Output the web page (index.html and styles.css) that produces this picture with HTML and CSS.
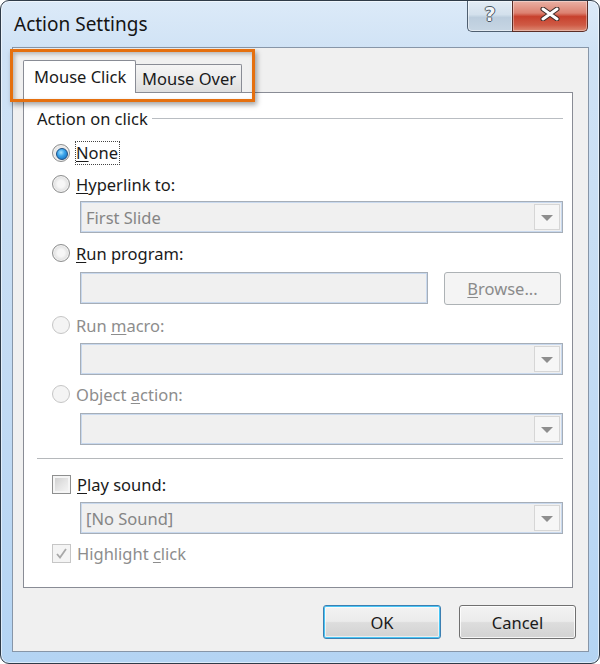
FILE: index.html
```html
<!DOCTYPE html>
<html>
<head>
<meta charset="utf-8">
<link rel="stylesheet" href="styles.css">
</head>
<body>
<div class="window">
  <div class="titlebar">
    <div class="title">Action Settings</div>
    <div class="caption">
      <div class="cbtn help"><span class="q">?</span></div>
      <div class="cbtn close">
        <svg width="22" height="14" viewBox="0 0 22 14">
          <path d="M4 2 L18 12 M18 2 L4 12" stroke="#3d2b28" stroke-width="5" stroke-linecap="round" fill="none"/>
          <path d="M4 2 L18 12 M18 2 L4 12" stroke="#ffffff" stroke-width="3" stroke-linecap="round" fill="none"/>
        </svg>
      </div>
    </div>
  </div>
  <div class="client">
    <div class="tabs">
      <div class="tab active">Mouse Click</div>
      <div class="tab inactive">Mouse Over</div>
    </div>
    <div class="panel">
      <div class="group-head"><span>Action on click</span><div class="gline"></div></div>
      <div class="opt r-none"><span class="radio checked"></span><span class="focus"><u>N</u>one</span></div>
      <div class="opt r-hyper"><span class="radio"></span><span><u>H</u>yperlink to:</span></div>
      <div class="combo c-hyper"><span class="ctext">First Slide</span><span class="dd"><span class="tri"></span></span></div>
      <div class="opt r-run"><span class="radio"></span><span><u>R</u>un program:</span></div>
      <div class="fieldrow"><div class="field"></div><div class="browse"><u>B</u>rowse...</div></div>
      <div class="opt r-macro dis"><span class="radio"></span><span>Run <u>m</u>acro:</span></div>
      <div class="combo c-macro"><span class="ctext"></span><span class="dd"><span class="tri"></span></span></div>
      <div class="opt r-obj dis"><span class="radio"></span><span>Object <u>a</u>ction:</span></div>
      <div class="combo c-obj"><span class="ctext"></span><span class="dd"><span class="tri"></span></span></div>
      <div class="sep"></div>
      <div class="opt r-play"><span class="check"></span><span><u>P</u>lay sound:</span></div>
      <div class="combo c-sound"><span class="ctext">[No Sound]</span><span class="dd"><span class="tri"></span></span></div>
      <div class="opt r-high dis"><span class="check on">
        <svg width="13" height="13" viewBox="0 0 13 13"><path d="M2 7 L5 10.5 L11 2" stroke="#a8a8a8" stroke-width="1.8" fill="none"/></svg>
      </span><span>Highlight <u>c</u>lick</span></div>
    </div>
    <div class="footer">
      <div class="btn ok">OK</div>
      <div class="btn cancel">Cancel</div>
    </div>
  </div>
  <div class="highlight"></div>
</div>
</body>
</html>
```
FILE: styles.css
```css
* { box-sizing: border-box; }
html, body { margin: 0; padding: 0; }
body {
  width: 600px;
  height: 664px;
  overflow: hidden;
  background: #ffffff;
  font-family: "Noto Sans", "Open Sans", sans-serif;
  font-size: 16px;
  color: #1a1a1a;
}
u { text-decoration: underline; text-underline-offset: 2px; text-decoration-thickness: 1px; }

.window {
  position: relative;
  width: 600px;
  height: 664px;
  border: 1px solid #2f3b48;
  border-radius: 9px;
  background: linear-gradient(180deg, #dceaf8 0%, #cfe2f5 8%, #c3dbf3 55%, #b4d4f3 100%);
  box-shadow: inset 0 0 0 1px rgba(255,255,255,0.55);
  padding: 0 10px 11px 11px;
  display: flex;
  flex-direction: column;
}

.titlebar {
  height: 46px;
  display: flex;
  justify-content: space-between;
  align-items: flex-start;
}
.title {
  padding: 10px 0 0 2px;
  font-size: 19px;
  line-height: 26px;
  color: #141414;
}
.caption { display: flex; margin-right: 1px; }
.cbtn {
  height: 31px;
  display: flex;
  align-items: center;
  justify-content: center;
  border: 1px solid #4f5f70;
  border-top: none;
}
.help {
  width: 45px;
  border-right: none;
  border-bottom-left-radius: 5px;
  background: linear-gradient(180deg, #e3ecf5 0%, #d3e0ec 45%, #bccddd 55%, #c7d6e4 100%);
  box-shadow: inset 0 0 0 1px rgba(255,255,255,0.5);
}
.q {
  font-family: "DejaVu Sans", sans-serif;
  font-weight: bold;
  font-size: 19px;
  line-height: 20px;
  color: #f2f5f8;
  margin-top: -4px;
  text-shadow: 1px 0 0 #4a5663, -1px 0 0 #4a5663, 0 1px 0 #4a5663, 0 -1px 0 #4a5663;
}
.close {
  width: 76px;
  border-color: #5b2d26;
  border-bottom-right-radius: 5px;
  background: linear-gradient(180deg, #eab1a5 0%, #dc8170 40%, #c7412d 52%, #cf5a45 80%, #dc8b75 100%);
  box-shadow: inset 0 0 0 1px rgba(255,255,255,0.35);
}
.close svg { margin-top: -4px; }

.client {
  flex: 1;
  border: 1px solid #8796a8;
  background: #f0f0f0;
  padding: 12px 12px 12px 10px;
  display: flex;
  flex-direction: column;
}

.tabs {
  display: flex;
  align-items: flex-end;
  height: 32px;
  position: relative;
  z-index: 1;
}
.tab {
  border: 1px solid #898c95;
  border-bottom: none;
  font-size: 16.5px;
  color: #1a1a1a;
  white-space: nowrap;
}
.tab.active {
  width: 113px;
  height: 33px;
  margin-bottom: -1px;
  background: #ffffff;
  padding: 1px 0 0 10px;
  line-height: 30px;
  border-radius: 2px 2px 0 0;
}
.tab.inactive {
  width: 106px;
  height: 28px;
  border-left: none;
  background: linear-gradient(180deg, #f5f5f5 0%, #ebebeb 50%, #dedede 100%);
  padding: 0 0 0 6px;
  line-height: 28px;
  border-radius: 0 2px 0 0;
}

.panel {
  height: 496px;
  margin-right: 3px;
  border: 1px solid #898c95;
  background: #ffffff;
  padding: 0 9px 0 13px;
  display: flex;
  flex-direction: column;
}

.group-head {
  margin-top: 13px;
  height: 24px;
  display: flex;
  align-items: center;
  gap: 4px;
  font-size: 16.5px;
}
.gline { flex: 1; height: 1px; background: #b9bdc2; box-shadow: 0 1px 0 #ffffff; }

.opt {
  display: flex;
  align-items: center;
  height: 24px;
  margin-left: 15px;
  gap: 6px;
  font-size: 16.5px;
  color: #1a1a1a;
}
.opt.dis { color: #8d8d8d; }
.focus { border: 1px dotted #444; padding: 0 1px 1px 0; margin-left: -1px; line-height: 21px; }

.r-none { margin-top: 11px; }
.r-hyper { margin-top: 7px; }
.c-hyper { margin-top: 5px; }
.r-run { margin-top: 8px; }
.fieldrow { margin-top: 7px; }
.r-macro { margin-top: 8px; }
.c-macro { margin-top: 6px; }
.r-obj { margin-top: 7px; }
.c-obj { margin-top: 7px; }
.sep { margin-top: 13px; height: 1px; background: #b5b8bb; box-shadow: 0 1px 0 #ffffff; }
.r-play { margin-top: 13px; }
.c-sound { margin-top: 6px; }
.r-high { margin-top: 7px; }

.radio {
  position: relative;
  width: 18px;
  height: 18px;
  flex: none;
  border-radius: 50%;
  border: 1px solid #8e8f8f;
  background: radial-gradient(circle at 50% 50%, #f7f7f7 0 30%, #dcdcdc 70%, #ececec 100%);
  box-shadow: inset 0 0 0 1px #f2f2f2;
}
.radio.checked::after {
  content: "";
  position: absolute;
  left: 3px;
  top: 3px;
  width: 10px;
  height: 10px;
  border-radius: 50%;
  border: 1px solid #1b4f85;
  background: radial-gradient(circle at 40% 35%, #a8e4ff 0%, #3aa4ea 40%, #0d64b6 100%);
}
.dis .radio { border-color: #c6c6c6; background: #f4f4f4; box-shadow: none; }

.check {
  position: relative;
  width: 19px;
  height: 19px;
  flex: none;
  border: 1px solid #8e8f8f;
  background: linear-gradient(135deg, #cbcbcb 0%, #e6e6e6 55%, #f7f7f7 100%);
  box-shadow: inset 0 0 0 2px #f5f5f5;
  display: flex;
  align-items: center;
  justify-content: center;
}
.dis .check { border-color: #c6c6c6; background: #f4f4f4; box-shadow: none; }

.combo {
  margin-left: 43px;
  height: 32px;
  border: 1px solid #a6aeb8;
  box-shadow: inset 0 0 0 1px #c9d9ee;
  background: #f0f0f0;
  display: flex;
  align-items: center;
  justify-content: space-between;
  padding: 2px 2px 2px 5px;
  font-size: 16.5px;
  color: #858585;
}
.dd {
  width: 26px;
  height: 26px;
  border: 1px solid #d6d6d6;
  background: #f6f6f6;
  display: flex;
  align-items: center;
  justify-content: center;
}
.tri {
  width: 0;
  height: 0;
  border-left: 6px solid transparent;
  border-right: 6px solid transparent;
  border-top: 6px solid #8e8e8e;
  margin-top: 2px;
}

.fieldrow {
  margin-left: 43px;
  height: 33px;
  display: flex;
  align-items: flex-start;
  gap: 16px;
}
.field {
  width: 348px;
  height: 32px;
  border: 1px solid #a6aeb8;
  box-shadow: inset 0 0 0 1px #c9d9ee;
  background: #f0f0f0;
}
.browse {
  width: 117px;
  height: 33px;
  border: 1px solid #adb2b5;
  border-radius: 3px;
  background: #f4f4f4;
  color: #8b8b8b;
  font-size: 16.5px;
  display: flex;
  align-items: center;
  justify-content: center;
}

.footer {
  display: flex;
  justify-content: flex-end;
  gap: 18px;
  margin-top: 17px;
}
.btn {
  height: 34px;
  border-radius: 3px;
  display: flex;
  align-items: center;
  justify-content: center;
  font-size: 16.5px;
  color: #1a1a1a;
  background: linear-gradient(180deg, #f3f3f3 0%, #ebebeb 48%, #dddddd 52%, #d2d2d2 100%);
}
.btn.ok {
  width: 118px;
  border: 1px solid #3c7fb1;
  box-shadow: inset 0 0 0 1px #48c5f5, inset 0 0 0 2px rgba(255,255,255,0.6);
}
.btn.cancel {
  width: 117px;
  border: 1px solid #707070;
  box-shadow: inset 0 0 0 1px rgba(255,255,255,0.8);
}

.highlight {
  position: absolute;
  left: 9px;
  top: 48px;
  width: 245px;
  height: 53px;
  border: 3px solid #e5700f;
  box-shadow: 2px 3px 5px rgba(0,0,0,0.35), inset 2px 2px 4px rgba(0,0,0,0.25);
  z-index: 5;
  pointer-events: none;
}
```
